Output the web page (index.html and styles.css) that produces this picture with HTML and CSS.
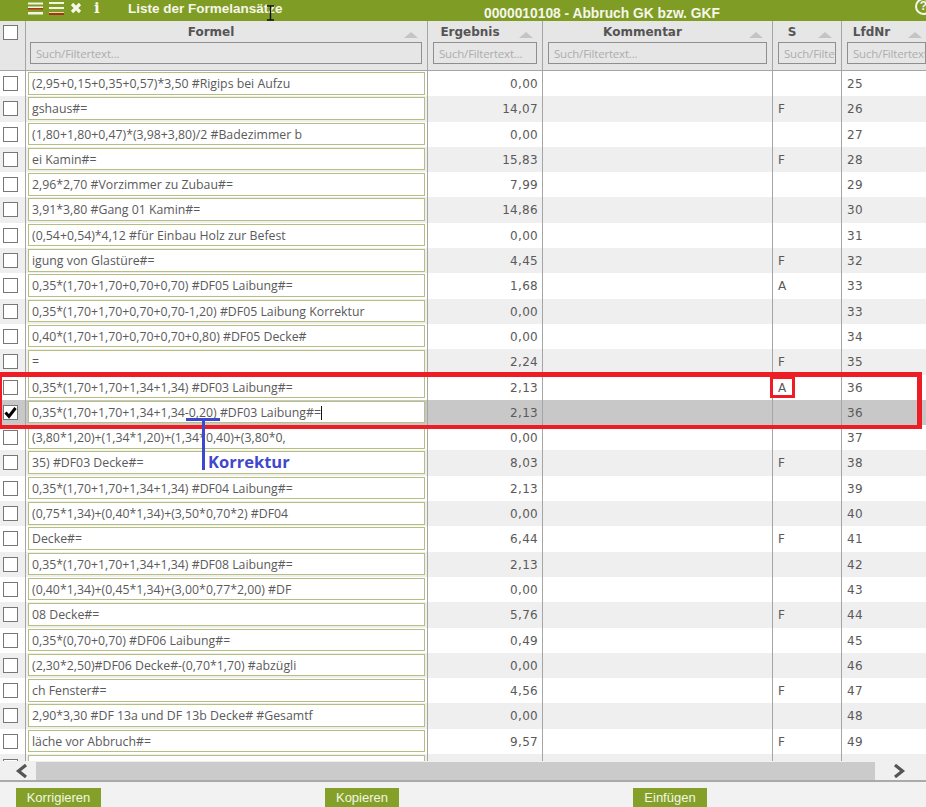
FILE: index.html
```html
<!DOCTYPE html>
<html lang="de">
<head>
  <meta charset="UTF-8">
  <title>Liste der Formelansätze</title>
  <link rel="stylesheet" href="styles.css">
</head>
<body>

  <div class="titlebar">
    <div class="tools">
      <svg class="tool" width="16" height="14" viewBox="0 0 16 14"><rect y="1.5" width="15" height="2" fill="#f4f4e4"/><rect y="5.5" width="15" height="1.5" fill="#f4f4e4"/><rect y="7" width="15" height="1.5" fill="#b2321e"/><rect y="11" width="15" height="2.5" fill="#f4f4e4"/></svg>
      <svg class="tool" width="16" height="14" viewBox="0 0 16 14"><rect y="1" width="15" height="2" fill="#f4f4e4"/><rect y="6" width="15" height="2" fill="#f4f4e4"/><rect y="11" width="15" height="1" fill="#e8d9b0"/><rect y="12" width="15" height="2" fill="#a5321c"/></svg>
      <svg class="tool-x" width="12" height="14" viewBox="0 0 12 14"><path d="M2 3 L10 11 M10 3 L2 11" stroke="#f6f6ea" stroke-width="3.2"/></svg>
      <span class="tool-i">i</span>
    </div>
    <span class="title">Liste der Formelansätze</span>
    <span class="job">0000010108 - Abbruch GK bzw. GKF</span>
    <span class="help">?</span>
    <svg class="ibeam" width="9" height="16" viewBox="0 0 9 16"><path d="M1 1 H8 M4.5 1 V15 M1 15 H8" stroke="#111" stroke-width="1.4" fill="none"/></svg>
  </div>

  <div class="table">
    <div class="head">
      <div class="hcell hcheck"><span class="box"></span></div>
      <div class="hcell hfirst">
        <div class="hname"><b>Formel</b><i class="sort"></i></div>
        <div class="filter">Such/Filtertext...</div>
      </div>
      <div class="hcell">
        <div class="hname"><b>Ergebnis</b><i class="sort"></i></div>
        <div class="filter">Such/Filtertext...</div>
      </div>
      <div class="hcell">
        <div class="hname"><b>Kommentar</b><i class="sort"></i></div>
        <div class="filter">Such/Filtertext...</div>
      </div>
      <div class="hcell">
        <div class="hname"><b>S</b><i class="sort"></i></div>
        <div class="filter">Such/Filtertext...</div>
      </div>
      <div class="hcell hlast">
        <div class="hname"><b>LfdNr</b><i class="sort"></i></div>
        <div class="filter">Such/Filtertext...</div>
      </div>
    </div>

    <div class="rows" id="rows"></div>

    <div class="scrollbar">
      <svg class="arrow" width="14" height="14" viewBox="0 0 14 14"><path d="M11 1 L3.5 7 L11 13" stroke="#555" stroke-width="3.2" fill="none"/></svg>
      <div class="track"></div>
      <svg class="arrow" width="14" height="14" viewBox="0 0 14 14"><path d="M3 1 L10.5 7 L3 13" stroke="#555" stroke-width="3.2" fill="none"/></svg>
    </div>

    <div class="mark-row"></div>
    <div class="mark-cell"></div>
    <div class="line-h"></div>
    <div class="line-v"></div>
    <div class="note">Korrektur</div>
  </div>

  <div class="footer">
    <button>Korrigieren</button>
    <button>Kopieren</button>
    <button>Einfügen</button>
  </div>

  <script src="rows.js"></script>
</body>
</html>
```

FILE: styles.css
```css
* {
  box-sizing: border-box;
}

body {
  margin: 0;
  width: 926px;
  height: 807px;
  overflow: hidden;
  background-color: #f2f2f2;
  font-family: "Open Sans", sans-serif;
  color: #555;
}

.titlebar {
  position: relative;
  height: 21px;
  background-color: #7f9c25;
  color: #f6f6ea;
  font-family: "Liberation Sans", sans-serif;
  font-weight: bold;
  overflow: hidden;
}

.tools {
  position: absolute;
  left: 28px;
  top: 1px;
  display: flex;
  align-items: center;
  gap: 5px;
}

.tool-i {
  font-family: "DejaVu Serif", serif;
  font-size: 15px;
  line-height: 14px;
  margin-left: 7px;
}

.title {
  position: absolute;
  left: 128px;
  top: 1px;
  font-size: 13.5px;
}

.job {
  position: absolute;
  left: 484px;
  top: 6px;
  font-size: 13.8px;
}

.help {
  position: absolute;
  left: 915px;
  top: -2px;
  width: 17px;
  height: 17px;
  border: 2px solid #f6f6ea;
  border-radius: 50%;
  font-size: 12px;
  line-height: 13px;
  text-align: center;
}

.ibeam {
  position: absolute;
  left: 266px;
  top: 5px;
}

.table {
  position: relative;
  height: 761px;
  background-color: #fff;
  overflow: hidden;
  border-bottom: 2px solid #aaa;
}

.head {
  display: grid;
  grid-template-columns: 26px 402px 115px 230px 69px 84px;
  height: 50px;
  background-color: #e6e6e6;
  border-bottom: 1px solid #a5a5a5;
}

.hcell {
  padding: 0 5px;
  border-right: 1px solid #a5a5a5;
  overflow: hidden;
}

.hfirst {
  padding-left: 4px;
}

.hlast {
  border-right: none;
  padding-right: 0;
}

.hcheck {
  padding: 4px 3px;
}

.hname {
  display: flex;
  justify-content: center;
  align-items: center;
  position: relative;
  height: 21px;
  padding-right: 30px;
  font-family: "DejaVu Sans", sans-serif;
  font-size: 12px;
  color: #555;
}

.sort {
  position: absolute;
  right: 4px;
  top: 11px;
  width: 0;
  height: 0;
  border-left: 7px solid transparent;
  border-right: 7px solid transparent;
  border-bottom: 6px solid #c4c4c4;
}

.filter {
  height: 22px;
  border: 1px solid #8f8f8f;
  padding: 0 5px;
  font-size: 11.5px;
  line-height: 21px;
  color: #adadad;
  letter-spacing: -0.2px;
  white-space: nowrap;
  overflow: hidden;
}

.rows {
  height: 690px;
  overflow: hidden;
}

.row {
  display: grid;
  grid-template-columns: 26px 402px 115px 230px 69px 84px;
  height: 25.3px;
  background-color: #fff;
}

.row.alt {
  background-color: #efefef;
}

.row.picked {
  background-color: #c8c8c8;
}

.cell {
  padding: 0 5px;
  border-right: 1px solid #a5a5a5;
  font-family: "DejaVu Sans", sans-serif;
  font-size: 12px;
  line-height: 26px;
  letter-spacing: 0.3px;
  color: #5a5a5a;
  white-space: nowrap;
  overflow: hidden;
}

.cell.num {
  padding-right: 4px;
  text-align: right;
}

.cell.last {
  border-right: none;
}

.cell.check {
  padding: 5px 3px 0;
}

.cell.formula {
  padding: 1px 2px;
}

.formula-input {
  height: 22.5px;
  padding: 0 3px;
  background-color: #fff;
  border: 1px solid #b7bf80;
  font-family: "Open Sans", sans-serif;
  font-size: 12.3px;
  line-height: 21px;
  letter-spacing: 0;
  overflow: hidden;
}

.caret {
  display: inline-block;
  width: 1px;
  height: 14px;
  background-color: #111;
  vertical-align: -3px;
}

.box {
  display: block;
  width: 15px;
  height: 15px;
  background-color: #fff;
  border: 1px solid #777;
}

.tick {
  display: block;
}

.scrollbar {
  display: flex;
  align-items: center;
  height: 19px;
  background-color: #f0f0f0;
  padding-left: 15px;
}

.track {
  width: 839px;
  height: 18px;
  margin: 1px 17px 0 7px;
  background-color: #cbcbcb;
}

.mark-row {
  position: absolute;
  left: -3px;
  top: 351px;
  width: 925px;
  height: 56.5px;
  border: 5px solid #ee1c25;
  border-bottom-width: 4px;
}

.mark-cell {
  position: absolute;
  left: 770px;
  top: 355px;
  width: 25px;
  height: 22px;
  border: 3px solid #ee1c25;
}

.line-h {
  position: absolute;
  left: 186px;
  top: 397px;
  width: 34px;
  height: 3px;
  background-color: #3f48cc;
}

.line-v {
  position: absolute;
  left: 202px;
  top: 399px;
  width: 3px;
  height: 50px;
  background-color: #3f48cc;
}

.note {
  position: absolute;
  left: 208px;
  top: 429px;
  font-size: 16.5px;
  font-weight: bold;
  color: #3f48cc;
}

.footer {
  display: flex;
  height: 25px;
  padding: 6px 0 0 16px;
  background-color: #f2f2f2;
}

button {
  height: 19px;
  padding: 0;
  border: none;
  background-color: #84a029;
  color: #f4f6e6;
  font-family: "Liberation Sans", sans-serif;
  font-size: 13px;
}

button:nth-child(1) {
  width: 85px;
  margin-right: 224px;
}

button:nth-child(2) {
  width: 74px;
  margin-right: 234px;
}

button:nth-child(3) {
  width: 74px;
}
```

FILE: rows.js
```js
const data = [
  ["(2,95+0,15+0,35+0,57)*3,50 #Rigips bei Aufzu", "0,00", "", "25"],
  ["gshaus#=", "14,07", "F", "26"],
  ["(1,80+1,80+0,47)*(3,98+3,80)/2 #Badezimmer b", "0,00", "", "27"],
  ["ei Kamin#=", "15,83", "F", "28"],
  ["2,96*2,70 #Vorzimmer zu Zubau#=", "7,99", "", "29"],
  ["3,91*3,80 #Gang 01 Kamin#=", "14,86", "", "30"],
  ["(0,54+0,54)*4,12 #für Einbau Holz zur Befest", "0,00", "", "31"],
  ["igung von Glastüre#=", "4,45", "F", "32"],
  ["0,35*(1,70+1,70+0,70+0,70) #DF05 Laibung#=", "1,68", "A", "33"],
  ["0,35*(1,70+1,70+0,70+0,70-1,20) #DF05 Laibung Korrektur", "0,00", "", "33"],
  ["0,40*(1,70+1,70+0,70+0,70+0,80) #DF05 Decke#", "0,00", "", "34"],
  ["=", "2,24", "F", "35"],
  ["0,35*(1,70+1,70+1,34+1,34) #DF03 Laibung#=", "2,13", "A", "36"],
  ["0,35*(1,70+1,70+1,34+1,34-0,20) #DF03 Laibung#=", "2,13", "", "36"],
  ["(3,80*1,20)+(1,34*1,20)+(1,34*0,40)+(3,80*0,", "0,00", "", "37"],
  ["35) #DF03 Decke#=", "8,03", "F", "38"],
  ["0,35*(1,70+1,70+1,34+1,34) #DF04 Laibung#=", "2,13", "", "39"],
  ["(0,75*1,34)+(0,40*1,34)+(3,50*0,70*2) #DF04", "0,00", "", "40"],
  ["Decke#=", "6,44", "F", "41"],
  ["0,35*(1,70+1,70+1,34+1,34) #DF08 Laibung#=", "2,13", "", "42"],
  ["(0,40*1,34)+(0,45*1,34)+(3,00*0,77*2,00) #DF", "0,00", "", "43"],
  ["08 Decke#=", "5,76", "F", "44"],
  ["0,35*(0,70+0,70) #DF06 Laibung#=", "0,49", "", "45"],
  ["(2,30*2,50)#DF06 Decke#-(0,70*1,70) #abzügli", "0,00", "", "46"],
  ["ch Fenster#=", "4,56", "F", "47"],
  ["2,90*3,30 #DF 13a und DF 13b Decke# #Gesamtf", "0,00", "", "48"],
  ["läche vor Abbruch#=", "9,57", "F", "49"],
  ["", "", "", ""]
];

const PICKED = 13;
const TICK = '<svg class="tick" width="13" height="13" viewBox="0 0 13 13"><path d="M1.5 6.5 L5 10.5 L11.5 2" stroke="#000" stroke-width="3" fill="none"/></svg>';
const rows = document.getElementById("rows");

data.forEach(function (d, i) {
  const row = document.createElement("div");
  row.className = "row";
  if (i === PICKED) {
    row.className += " picked";
  } else if (i % 2 === 1) {
    row.className += " alt";
  }
  const caret = i === PICKED ? '<span class="caret"></span>' : "";
  row.innerHTML =
    '<div class="cell check"><span class="box">' + (i === PICKED ? TICK : "") + "</span></div>" +
    '<div class="cell formula"><div class="formula-input">' + d[0] + caret + "</div></div>" +
    '<div class="cell num">' + d[1] + "</div>" +
    '<div class="cell"></div>' +
    '<div class="cell">' + d[2] + "</div>" +
    '<div class="cell last">' + d[3] + "</div>";
  rows.appendChild(row);
});
```
